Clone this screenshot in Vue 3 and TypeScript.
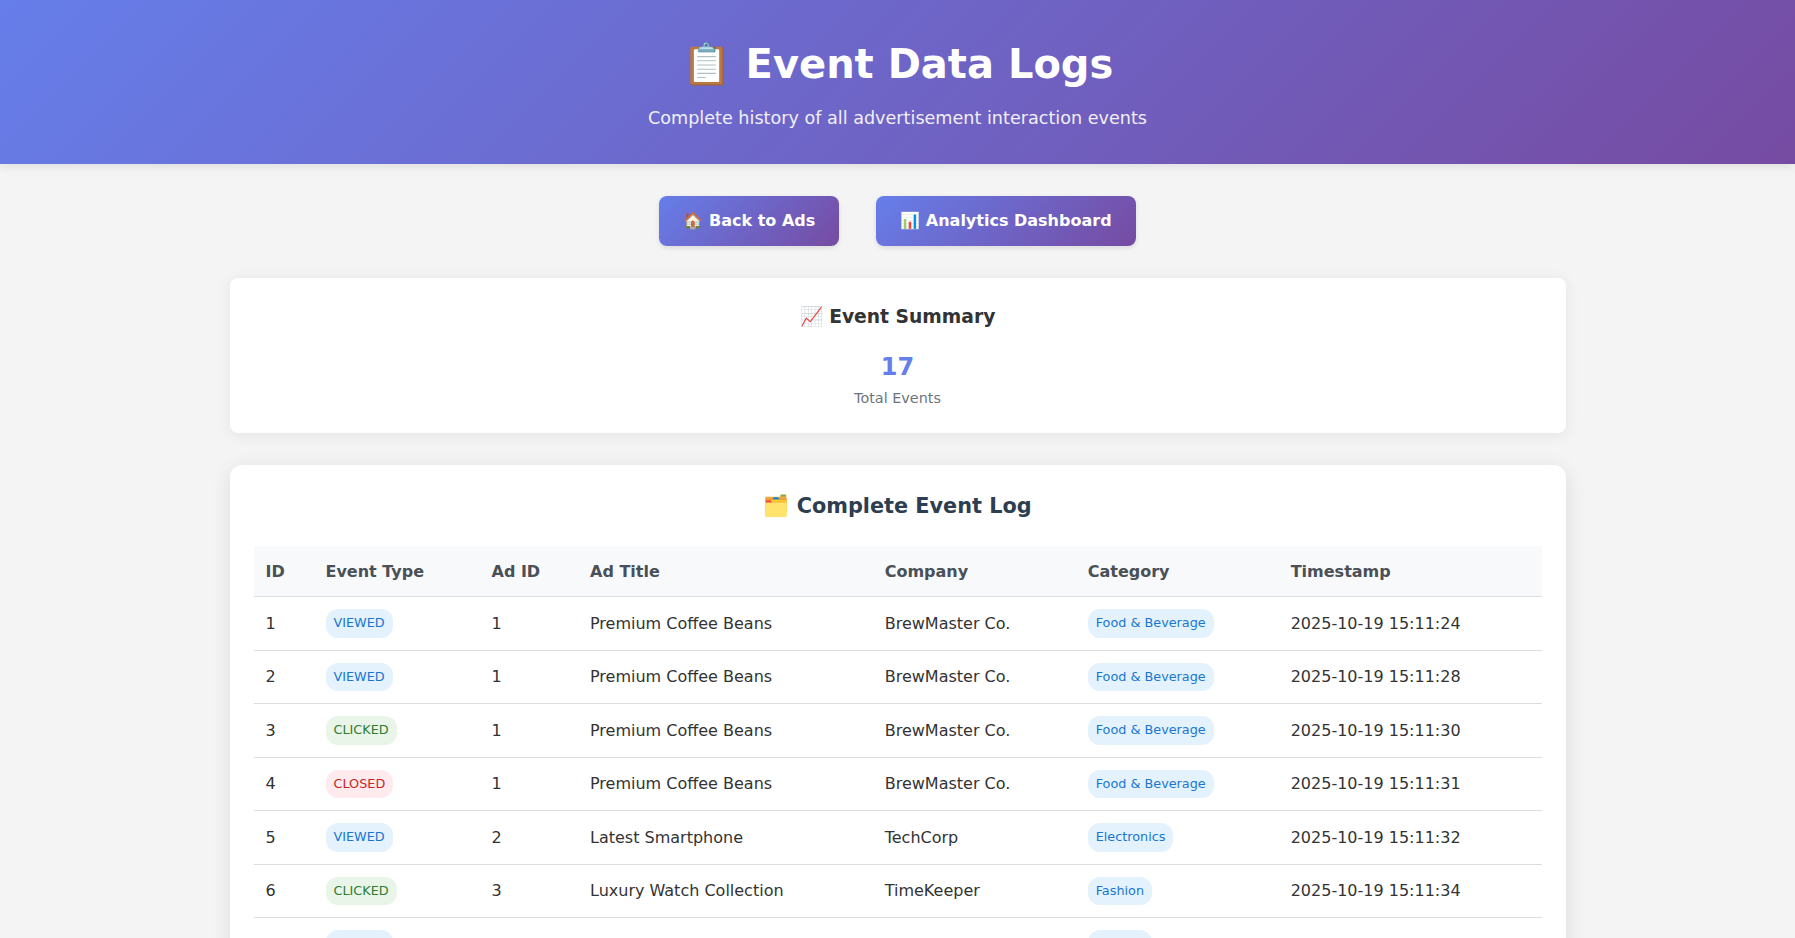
<script setup lang="ts">
interface LogEvent { id: number; type: string; adId: number; title: string; company: string; category: string; time: string }
const columns = ['ID', 'Event Type', 'Ad ID', 'Ad Title', 'Company', 'Category', 'Timestamp']
const make = (id: number, type: string, adId: number, title: string, company: string, category: string, sec: number): LogEvent =>
  ({ id, type, adId, title, company, category, time: `2025-10-19 15:11:${sec}` })
const events: LogEvent[] = [
  make(1, 'viewed', 1, 'Premium Coffee Beans', 'BrewMaster Co.', 'Food & Beverage', 24),
  make(2, 'viewed', 1, 'Premium Coffee Beans', 'BrewMaster Co.', 'Food & Beverage', 28),
  make(3, 'clicked', 1, 'Premium Coffee Beans', 'BrewMaster Co.', 'Food & Beverage', 30),
  make(4, 'closed', 1, 'Premium Coffee Beans', 'BrewMaster Co.', 'Food & Beverage', 31),
  make(5, 'viewed', 2, 'Latest Smartphone', 'TechCorp', 'Electronics', 32),
  make(6, 'clicked', 3, 'Luxury Watch Collection', 'TimeKeeper', 'Fashion', 34),
  make(7, 'viewed', 3, 'Luxury Watch Collection', 'TimeKeeper', 'Fashion', 36),
]
</script>

<template>
  <div class="page">
    <header class="header">
      <h1>📋 Event Data Logs</h1>
      <p>Complete history of all advertisement interaction events</p>
    </header>
    <main class="container">
      <nav class="nav">
        <a class="btn">🏠 Back to Ads</a>
        <a class="btn">📊 Analytics Dashboard</a>
      </nav>
      <section class="summary">
        <h3>📈 Event Summary</h3>
        <div class="number">17</div>
        <div class="label">Total Events</div>
      </section>
      <section class="log">
        <h2>🗂️ Complete Event Log</h2>
        <table>
          <colgroup><col v-for="(c, i) in columns" :key="c" :class="'c' + i"></colgroup>
          <thead><tr><th v-for="c in columns" :key="c">{{ c }}</th></tr></thead>
          <tbody>
            <tr v-for="e in events" :key="e.id">
              <td>{{ e.id }}</td>
              <td><span class="badge" :class="e.type">{{ e.type.toUpperCase() }}</span></td>
              <td>{{ e.adId }}</td>
              <td>{{ e.title }}</td>
              <td>{{ e.company }}</td>
              <td><span class="badge viewed">{{ e.category }}</span></td>
              <td>{{ e.time }}</td>
            </tr>
          </tbody>
        </table>
      </section>
    </main>
  </div>
</template>

<style>
body { margin: 0; background: #f4f4f4; }
</style>
<style scoped>
* { box-sizing: border-box; }
.page { height: 938px; overflow: hidden; background: #f4f4f4; color: #333; font-family: "DejaVu Sans", sans-serif; font-size: 16px; line-height: 1.6; }
.header { padding: 32px 0; text-align: center; color: #fff; background: linear-gradient(135deg, #667eea, #764ba2); box-shadow: 0 2px 10px rgba(0, 0, 0, .1); }
h1 { margin: 0 0 8px; font-size: 40px; }
.header p { margin: 0; font-size: 17.6px; opacity: .9; }
.container { width: 1336px; margin: 0 auto; padding-top: 32px; }
.nav { display: flex; justify-content: center; gap: 37px; margin-bottom: 32px; }
.btn { padding: 12px 24px; border-radius: 8px; color: #fff; font-weight: 600; background: linear-gradient(135deg, #667eea, #764ba2); box-shadow: 0 2px 5px rgba(0, 0, 0, .1); }
.summary { margin-bottom: 32px; padding: 24px; text-align: center; background: #fff; border-radius: 8px; box-shadow: 0 2px 15px rgba(0, 0, 0, .07); }
h3 { margin: 0 0 16px; font-size: 18.72px; line-height: 30.2px; }
.number { font-size: 24px; font-weight: bold; color: #667eea; }
.label { padding-top: .5px; margin-bottom: -.5px; font-size: 14.4px; color: #6c757d; }
.log { padding: 24px; background: #fff; border-radius: 12px; box-shadow: 0 4px 20px rgba(0, 0, 0, .1); }
h2 { margin: 0 0 23.25px; padding-top: .5px; font-size: 20.8px; text-align: center; color: #2c3e50; }
table { width: 100%; table-layout: fixed; border-collapse: collapse; }
.c0 { width: 60px; } .c1 { width: 166px; } .c2 { width: 98.5px; } .c3 { width: 294.7px; } .c4 { width: 203px; } .c5 { width: 203px; }
th, td { padding: 12.15px 12px 11.92px; text-align: left; border-bottom: 1px solid #ddd; }
th { padding: 12.4px 12px 11.8px; background: #f8f9fa; color: #495057; font-weight: 600; }
.badge { display: inline-block; padding: 4px 8px; border-radius: 12px; font-size: 12.8px; }
.viewed { background: #e3f2fd; color: #1976d2; }
.clicked { background: #e8f5e8; color: #2e7d32; }
.closed { background: #ffebee; color: #c62828; }
</style>
